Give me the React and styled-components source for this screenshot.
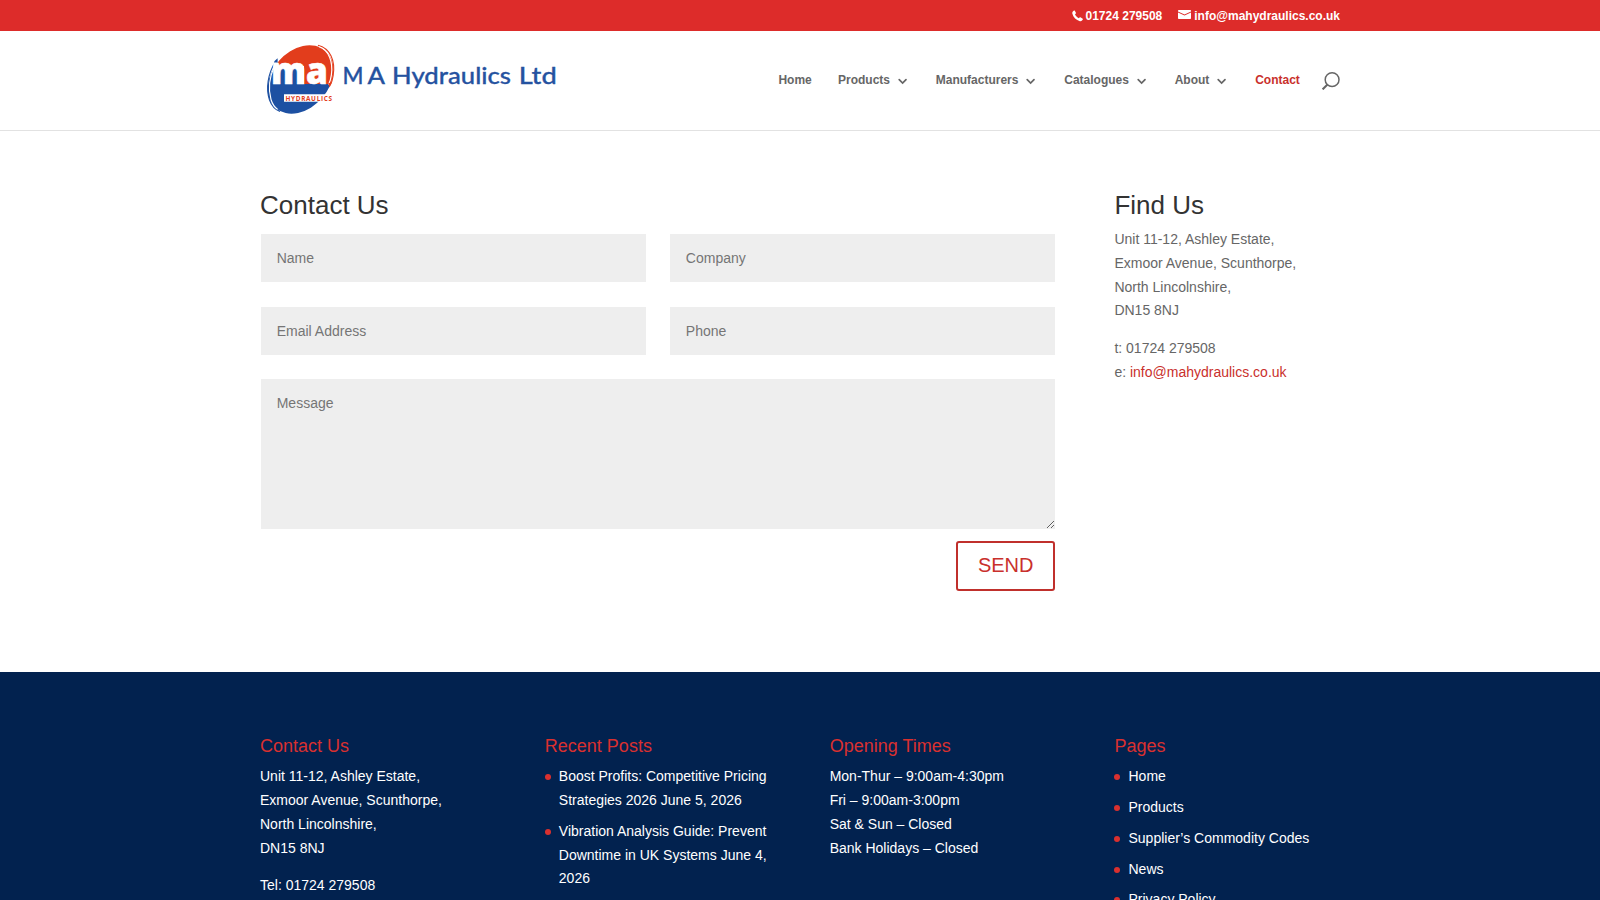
import React from 'react'
import styled, { createGlobalStyle, css } from 'styled-components'

const GlobalStyle = createGlobalStyle`
  *, *::before, *::after {
    box-sizing: border-box;
  }
  html, body {
    margin: 0;
    height: 100%;
    overflow: hidden;
  }
  body {
    background: #fff;
    color: #666;
    font-family: 'Liberation Sans', Arial, Helvetica, sans-serif;
    font-size: 14px;
    line-height: 1.7;
  }
`

const Container = styled.div`
  width: 1080px;
  margin: 0 auto;
`

const TopBar = styled.div`
  height: 31px;
  background: #dd2c2a;
  color: #fff;
  font-size: 12px;
  font-weight: 700;
  line-height: 12px;
`

const TopBarInner = styled(Container)`
  display: flex;
  justify-content: flex-end;
  gap: 16px;
  padding-top: 10px;
`

const TopBarItem = styled.span`
  display: flex;
  gap: ${props => props.$gap}px;

  svg {
    display: block;
  }
`

const Header = styled.header`
  height: 100px;
  border-bottom: 1px solid #e2e2e2;
`

const HeaderInner = styled(Container)`
  display: flex;
  justify-content: space-between;
`

const Logo = styled.svg`
  display: block;
  width: 310px;
  height: 98px;
`

const Nav = styled.nav`
  display: flex;
  align-items: center;
  gap: 26.2px;
  height: 99px;
  font-size: 12px;
  font-weight: 700;
  line-height: 12px;
`

const NavLink = styled.a`
  display: flex;
  align-items: center;
  gap: 7px;
  color: ${props => (props.$active ? '#c9302c' : '#666')};

  svg {
    display: block;
    margin-right: 0.6px;
  }
`

const NavLabel = styled.span`
  padding-bottom: 2px;
`

const SearchIcon = styled.svg`
  display: block;
  width: 18px;
  height: 18px;
  margin-left: -4px;
`

const Columns = styled(Container)`
  display: flex;
  gap: 59.4px;
`

const Main = styled.main`
  height: 541px;
  padding-top: 61px;
`

const FormColumn = styled.section`
  width: 795px;
`

const Column = styled.section`
  width: 225.45px;
`

const Title = styled.h2`
  margin: 0;
  padding-bottom: 10px;
  color: #333;
  font-size: 26px;
  font-weight: 400;
  line-height: 1em;
`

const Form = styled.form`
  display: grid;
  grid-template-columns: 1fr 1fr;
  column-gap: 24px;
  row-gap: 25px;
  padding: 6px 0 0 0.7px;
`

const fieldStyle = css`
  display: block;
  width: 100%;
  margin: 0;
  padding: 16px;
  border: 0;
  border-radius: 0;
  background: #eee;
  color: #999;
  font: 14px 'Liberation Sans', Arial, sans-serif;
  outline: none;

  &::placeholder {
    color: #757575;
    opacity: 1;
  }
`

const Input = styled.input`
  ${fieldStyle}
  height: 48px;
`

const Message = styled.textarea`
  ${fieldStyle}
  grid-column: 1 / -1;
  height: 150px;
  margin-top: -1px;
  resize: vertical;
`

const SendButton = styled.button`
  grid-column: 1 / -1;
  justify-self: end;
  height: 50px;
  margin-top: -13px;
  padding: 0 19.5px 1px 20px;
  border: 2px solid #c0302c;
  border-radius: 3px;
  background: transparent;
  color: #c9302c;
  font: 20px/43px 'Liberation Sans', Arial, sans-serif;
`

const Paragraph = styled.p`
  margin: 0;
  padding-bottom: 14px;
`

const MailLink = styled.a`
  color: #c9302c;
`

const Footer = styled.footer`
  height: 228px;
  padding-top: 65.3px;
  overflow: hidden;
  background: #02224f;
  color: #fff;
`

const FooterTitle = styled.h4`
  margin: 0;
  padding-bottom: 10px;
  color: #d9302f;
  font-size: 18px;
  font-weight: 400;
  line-height: 1em;
`

const List = styled.ul`
  margin: 0;
  padding: 0;
  list-style: none;
`

const ListItem = styled.li`
  display: flex;
  align-items: flex-start;
  gap: 8px;
  margin-bottom: 7px;

  &::before {
    content: '';
    flex: none;
    width: 6px;
    height: 6px;
    margin-top: 9px;
    border-radius: 3px;
    background: #d9302f;
  }
`

const navItems = [
  { label: 'Home' },
  { label: 'Products', menu: true },
  { label: 'Manufacturers', menu: true },
  { label: 'Catalogues', menu: true },
  { label: 'About', menu: true },
  { label: 'Contact', active: true },
]

const posts = [
  'Boost Profits: Competitive Pricing Strategies 2026 June 5, 2026',
  'Vibration Analysis Guide: Prevent Downtime in UK Systems June 4, 2026',
]

const pages = ['Home', 'Products', 'Supplier’s Commodity Codes', 'News', 'Privacy Policy']

const PhoneIcon = () => (
  <svg width="12" height="12" viewBox="0 0 12 12" fill="#fff">
    <path d="M.8 1.500 2 .6c.3-.2.6-.1.8.2l1.100 2c.2.3.1.6-.1.800l-.8.700c.6 1.500 2.200 3.100 3.800 3.900l.8-.8c.2-.2.5-.3.800-.1l2.300 1.500c.3.200.4.500.1.800l-.8 1c-.5.600-1.300.800-2.100.600C4.200 10.200 1.300 7.300.3 3.500.1 2.700.3 2 .8 1.500z" />
  </svg>
)

const MailIcon = () => (
  <svg width="13" height="12" viewBox="0 0 13 12" fill="#fff">
    <path d="M.8 0h11.400c.5 0 .8.3.8.8v.8L6.500 4.600 0 1.600V.8C0 .3.3 0 .8 0z" />
    <path d="M0 2.500l6.500 3 6.500-3v5.700c0 .5-.3.8-.8.8H.8C.3 9 0 8.700 0 8.200z" />
  </svg>
)

const Chevron = () => (
  <svg width="12" height="12" viewBox="0 0 12 12" fill="none" stroke="#666" strokeWidth="1.700">
    <path d="M2.200 4.700l3.400 3.400L9 4.700" strokeLinecap="round" />
  </svg>
)

const CompanyLogo = () => (
  <Logo viewBox="260 31 310 98">
    <defs>
      <clipPath id="badge">
        <ellipse cx="300.500" cy="79.400" rx="38" ry="28.500" transform="rotate(-49 300.500 79.400)" />
      </clipPath>
    </defs>
    <g clipPath="url(#badge)">
      <path d="M260 40h80v46h-36V66h-44z" fill="#e23d1c" />
      <path d="M260 66h43v18h37v36h-80z" fill="#1d50a2" />
    </g>
    <path
      d="M318 45.300c12 3 17.500 15 15.200 30-.6 4-1.500 7-3 10"
      fill="none"
      stroke="#e23d1c"
      strokeWidth="1.100"
    />
    <path
      d="M319 46.800c10 3.500 14.200 15 12.400 28-.5 4-1.400 7-2.900 10"
      fill="none"
      stroke="#fff"
      strokeWidth="1.200"
    />
    <path d="M332 82l-2.400 5.400-1.600-4z" fill="#e23d1c" />
    <path
      d="M275.500 61.500c-7.500 12-10 27-6 38.500 2 5.500 5.500 9.500 10.500 11.500"
      fill="none"
      stroke="#1d50a2"
      strokeWidth="1.100"
    />
    <path
      d="M274.500 66c-5 11-6.500 23-3.500 33.500 1.300 4.300 3.300 7.500 6.500 9.800"
      fill="none"
      stroke="#fff"
      strokeWidth="1.100"
    />
    <path d="M274 61.500l3.600-3.200v5z" fill="#1d50a2" />
    <text
      x="271"
      y="84.300"
      fill="#fff"
      stroke="#fff"
      strokeWidth="0.600"
      fontFamily="Open Sans, sans-serif"
      fontWeight="800"
      fontSize="37.500"
      textLength="57"
      lengthAdjust="spacingAndGlyphs"
    >
      ma
    </text>
    <path d="M284 94.300h51v7.500h-51z" fill="#fff" />
    <text
      x="285.500"
      y="100.600"
      fill="#e23d1c"
      fontFamily="Open Sans, sans-serif"
      fontWeight="700"
      fontSize="6.400"
      textLength="46.500"
    >
      HYDRAULICS
    </text>
    <g
      fill="#2552a0"
      stroke="#2552a0"
      strokeWidth="0.300"
      fontFamily="Lato, sans-serif"
      fontSize="23.500"
      fontWeight="500"
    >
      <text x="342.600" y="83.700" textLength="21" lengthAdjust="spacingAndGlyphs">M</text>
      <text x="367.500" y="83.700" textLength="17.500" lengthAdjust="spacingAndGlyphs">A</text>
      <text x="392" y="83.700" textLength="119" lengthAdjust="spacingAndGlyphs">Hydraulics</text>
      <text x="518.800" y="83.700" textLength="38" lengthAdjust="spacingAndGlyphs">Ltd</text>
    </g>
  </Logo>
)

const App = () => (
  <>
    <GlobalStyle />
    <TopBar>
      <TopBarInner>
        <TopBarItem $gap={2}>
          <PhoneIcon />
          01724 279508
        </TopBarItem>
        <TopBarItem $gap={3}>
          <MailIcon />
          info@mahydraulics.co.uk
        </TopBarItem>
      </TopBarInner>
    </TopBar>
    <Header>
      <HeaderInner>
        <CompanyLogo />
        <Nav>
          {navItems.map(item => (
            <NavLink key={item.label} $active={item.active}>
              <NavLabel>{item.label}</NavLabel>
              {item.menu && <Chevron />}
            </NavLink>
          ))}
          <SearchIcon viewBox="0 0 18 18" fill="none" stroke="#666" strokeWidth="1.500">
            <circle cx="10.100" cy="7.700" r="6.900" />
            <path d="M5.500 12.500L.6 17.400" strokeWidth="2" />
          </SearchIcon>
        </Nav>
      </HeaderInner>
    </Header>
    <Main>
      <Columns>
        <FormColumn>
          <Title>Contact Us</Title>
          <Form>
            <Input placeholder="Name" />
            <Input placeholder="Company" />
            <Input placeholder="Email Address" />
            <Input placeholder="Phone" />
            <Message placeholder="Message" />
            <SendButton type="button">SEND</SendButton>
          </Form>
        </FormColumn>
        <Column>
          <Title>Find Us</Title>
          <Paragraph>
            Unit 11-12, Ashley Estate,
            <br />
            Exmoor Avenue, Scunthorpe,
            <br />
            North Lincolnshire,
            <br />
            DN15 8NJ
          </Paragraph>
          <Paragraph>
            t: 01724 279508
            <br />
            e: <MailLink>info@mahydraulics.co.uk</MailLink>
          </Paragraph>
        </Column>
      </Columns>
    </Main>
    <Footer>
      <Columns>
        <Column>
          <FooterTitle>Contact Us</FooterTitle>
          <Paragraph>
            Unit 11-12, Ashley Estate,
            <br />
            Exmoor Avenue, Scunthorpe,
            <br />
            North Lincolnshire,
            <br />
            DN15 8NJ
          </Paragraph>
          <Paragraph>Tel: 01724 279508</Paragraph>
        </Column>
        <Column>
          <FooterTitle>Recent Posts</FooterTitle>
          <List>
            {posts.map(post => (
              <ListItem key={post}>{post}</ListItem>
            ))}
          </List>
        </Column>
        <Column>
          <FooterTitle>Opening Times</FooterTitle>
          <Paragraph>
            Mon-Thur – 9:00am-4:30pm
            <br />
            Fri – 9:00am-3:00pm
            <br />
            Sat &amp; Sun – Closed
            <br />
            Bank Holidays – Closed
          </Paragraph>
        </Column>
        <Column>
          <FooterTitle>Pages</FooterTitle>
          <List>
            {pages.map(page => (
              <ListItem key={page}>{page}</ListItem>
            ))}
          </List>
        </Column>
      </Columns>
    </Footer>
  </>
)

export default App
